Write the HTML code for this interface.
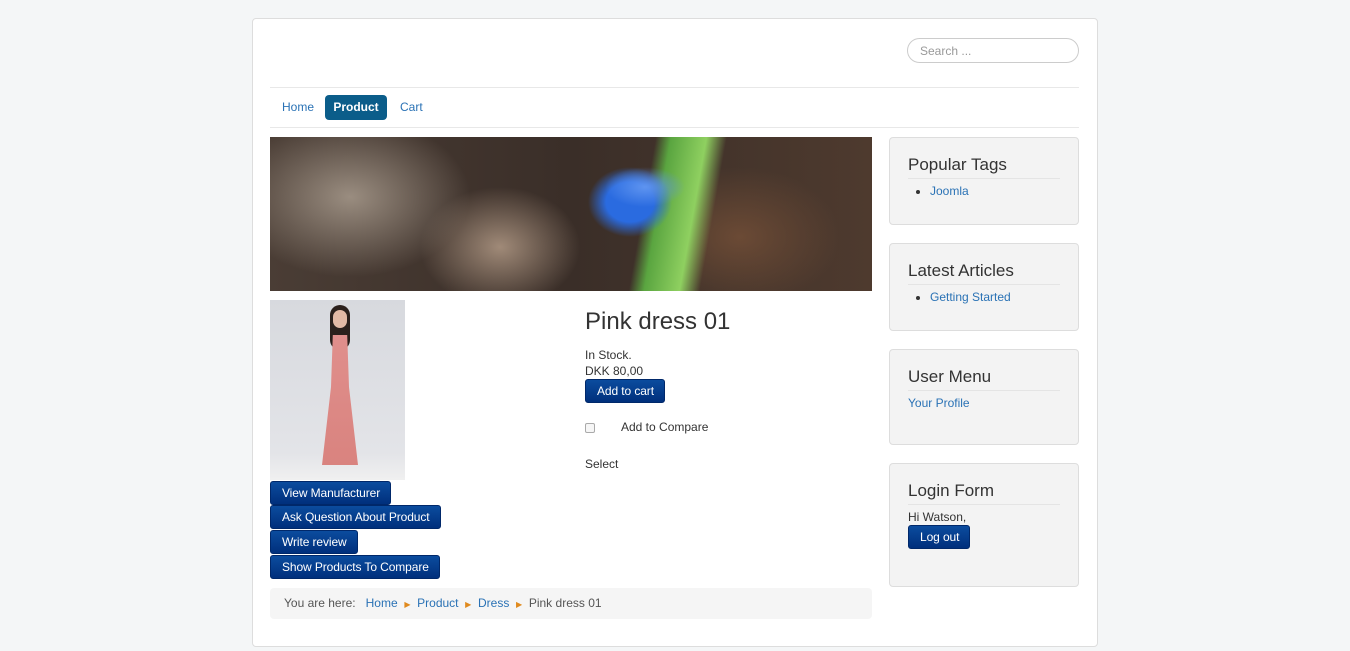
<!DOCTYPE html>
<html><head><meta charset="utf-8"><style>
*{box-sizing:border-box;margin:0;padding:0}
body{width:1350px;height:651px;background:#f4f6f7;font-family:"Liberation Sans",sans-serif;font-size:12px;color:#333;position:relative;overflow:hidden}
.page{position:absolute;left:252px;top:18px;width:846px;height:629px;background:#fff;border:1px solid #ddd;border-radius:4px}
.abs{position:absolute}
a{color:#2a72b5;text-decoration:none}
.search{left:654px;top:19px;width:172px;height:25px;border:1px solid #ccc;border-radius:13px;color:#999;padding:5px 12px;font-size:12px}
.hr{left:17px;width:809px;height:1px;background:#e8e8e8}
.nav a{position:absolute;top:76px;height:25px;line-height:25px;font-size:12px}
.btn{position:absolute;height:24px;line-height:23px;color:#fff;font-size:12px;padding:0 10px 0 11px;border-radius:3px;background:linear-gradient(#0b4c9e,#002f7c);border:1px solid #00286a;white-space:nowrap;letter-spacing:-0.1px}
.mod{position:absolute;left:636px;width:190px;background:#f3f3f3;border:1px solid #ddd;border-radius:4px;padding:17px 18px}
.mod h3{font-size:17px;font-weight:normal;color:#333;padding-bottom:3px;border-bottom:1px solid #e4e4e4;margin-bottom:5px;line-height:20px}
.mod li{margin-left:22px;font-size:12px}
.banner{left:17px;top:118px;width:602px;height:154px;overflow:hidden;background:
radial-gradient(ellipse 40px 20px at 375px 50px,#5e94f0,transparent),
radial-gradient(ellipse 60px 50px at 360px 65px,#2a6be0 40%,transparent 70%),
linear-gradient(100deg,transparent 380px,#5aa540 395px,#8fd060 430px,transparent 450px),
radial-gradient(ellipse 120px 80px at 80px 60px,#9a8d80,transparent),
radial-gradient(ellipse 100px 70px at 470px 100px,#6b4a35,transparent),
radial-gradient(ellipse 80px 60px at 230px 110px,#a08a78,transparent),
linear-gradient(90deg,#4a3d35,#3a2e28 50%,#4e3a2e)}
.dress{left:17px;top:281px;width:135px;height:180px;background:linear-gradient(#d7d9de,#e3e4e8 85%,#f0f0f0)}
</style></head><body>
<div class="page">
<div class="abs search">Search ...</div>
<div class="abs hr" style="top:68px"></div>
<div class="nav">
<a style="left:29px">Home</a>
<a style="left:72px;width:62px;background:#0b5d8a;color:#fff;border-radius:4px;text-align:center;font-weight:bold">Product</a>
<a style="left:147px">Cart</a>
</div>
<div class="abs hr" style="top:108px"></div>
<div class="abs banner"></div>
<div class="abs dress">
<div class="abs" style="left:60px;top:5px;width:20px;height:45px;background:#2b201c;border-radius:10px"></div>
<div class="abs" style="left:63px;top:10px;width:14px;height:18px;background:#e2b9a5;border-radius:7px"></div>
<div class="abs" style="left:52px;top:35px;width:36px;height:130px;background:linear-gradient(#e08f8c,#d9837f);clip-path:polygon(30% 0,70% 0,75% 40%,100% 100%,0 100%,25% 40%)"></div>
</div>
<div class="btn" style="left:17px;top:462px">View Manufacturer</div>
<div class="btn" style="left:17px;top:486px">Ask Question About Product</div>
<div class="btn" style="left:17px;top:511px">Write review</div>
<div class="btn" style="left:17px;top:536px">Show Products To Compare</div>
<div class="abs" style="left:332px;top:289px;font-size:24px;color:#333">Pink dress 01</div>
<div class="abs" style="left:332px;top:328px;line-height:16px">In Stock.<br>DKK 80,00</div>
<div class="btn" style="left:332px;top:360px">Add to cart</div>
<div class="abs" style="left:332px;top:404px;width:10px;height:10px;border:1px solid #aaa;border-radius:2px;background:#f6f6f6"></div>
<div class="abs" style="left:368px;top:401px">Add to Compare</div>
<div class="abs" style="left:332px;top:438px">Select</div>
<div class="abs" style="left:17px;top:569px;width:602px;height:31px;background:#f5f5f5;border-radius:4px;padding:8px 14px;color:#555">You are here: &nbsp; <a>Home</a> &nbsp;<span style="color:#e08a1e;font-size:8px">▶</span>&nbsp; <a>Product</a> &nbsp;<span style="color:#e08a1e;font-size:8px">▶</span>&nbsp; <a>Dress</a> &nbsp;<span style="color:#e08a1e;font-size:8px">▶</span>&nbsp; Pink dress 01</div>
<div class="mod" style="top:118px;height:88px"><h3>Popular Tags</h3><ul><li><a>Joomla</a></li></ul></div>
<div class="mod" style="top:224px;height:88px"><h3>Latest Articles</h3><ul><li><a>Getting Started</a></li></ul></div>
<div class="mod" style="top:330px;height:96px"><h3>User Menu</h3><a>Your Profile</a></div>
<div class="mod" style="top:444px;height:124px"><h3>Login Form</h3><div>Hi Watson,</div><div class="btn" style="position:relative;display:inline-block;margin-top:1px">Log out</div></div>
</div>
</body></html>
